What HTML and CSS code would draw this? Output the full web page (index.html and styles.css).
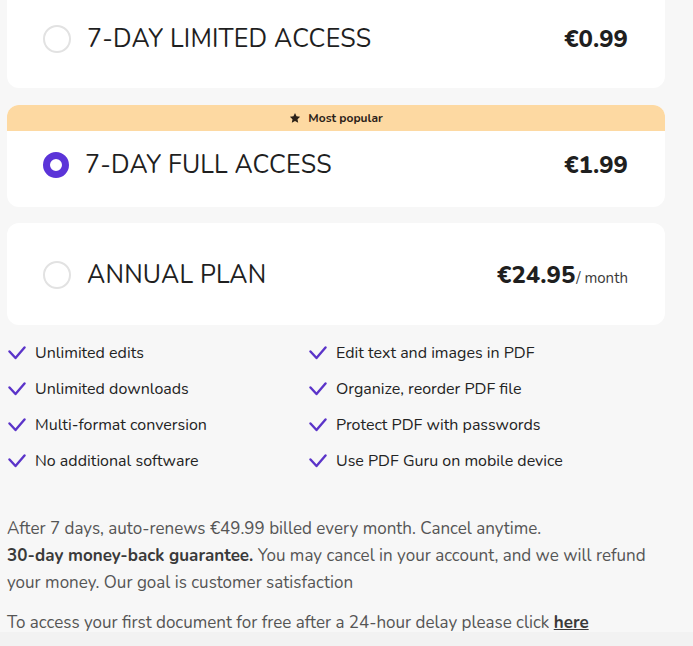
FILE: index.html
```html
<!DOCTYPE html>
<html lang="en">
<head>
<meta charset="utf-8">
<link rel="stylesheet" href="styles.css">
</head>
<body>
<div class="page">
  <div class="plans">
    <div class="card card-first">
      <div class="card-body">
        <span class="radio"></span>
        <span class="plan-name">7-DAY LIMITED ACCESS</span>
        <span class="price">€0.99</span>
      </div>
    </div>
    <div class="card card-popular">
      <div class="banner">
        <svg class="star" viewBox="0 0 24 24" width="12" height="12"><path d="M12 1.8l3.1 6.6 7.2.9-5.3 5 1.4 7.1L12 17.9l-6.4 3.5 1.4-7.1-5.3-5 7.2-.9z" fill="#2b2118"/></svg>
        <span>Most popular</span>
      </div>
      <div class="card-body body-popular">
        <span class="radio radio-on"></span>
        <span class="plan-name">7-DAY FULL ACCESS</span>
        <span class="price">€1.99</span>
      </div>
    </div>
    <div class="card">
      <div class="card-body">
        <span class="radio"></span>
        <span class="plan-name">ANNUAL PLAN</span>
        <span class="price">€24.95<span class="per">/ month</span></span>
      </div>
    </div>
  </div>

  <ul class="features">
    <li><svg class="check" viewBox="0 0 18 14" width="18" height="14"><path d="M1.5 5.5l6 6.5L16.5 1.5" fill="none" stroke="#5b34c9" stroke-width="2.4" stroke-linecap="round" stroke-linejoin="round"/></svg>Unlimited edits</li>
    <li><svg class="check" viewBox="0 0 18 14" width="18" height="14"><path d="M1.5 5.5l6 6.5L16.5 1.5" fill="none" stroke="#5b34c9" stroke-width="2.4" stroke-linecap="round" stroke-linejoin="round"/></svg>Edit text and images in PDF</li>
    <li><svg class="check" viewBox="0 0 18 14" width="18" height="14"><path d="M1.5 5.5l6 6.5L16.5 1.5" fill="none" stroke="#5b34c9" stroke-width="2.4" stroke-linecap="round" stroke-linejoin="round"/></svg>Unlimited downloads</li>
    <li><svg class="check" viewBox="0 0 18 14" width="18" height="14"><path d="M1.5 5.5l6 6.5L16.5 1.5" fill="none" stroke="#5b34c9" stroke-width="2.4" stroke-linecap="round" stroke-linejoin="round"/></svg>Organize, reorder PDF file</li>
    <li><svg class="check" viewBox="0 0 18 14" width="18" height="14"><path d="M1.5 5.5l6 6.5L16.5 1.5" fill="none" stroke="#5b34c9" stroke-width="2.4" stroke-linecap="round" stroke-linejoin="round"/></svg>Multi-format conversion</li>
    <li><svg class="check" viewBox="0 0 18 14" width="18" height="14"><path d="M1.5 5.5l6 6.5L16.5 1.5" fill="none" stroke="#5b34c9" stroke-width="2.4" stroke-linecap="round" stroke-linejoin="round"/></svg>Protect PDF with passwords</li>
    <li><svg class="check" viewBox="0 0 18 14" width="18" height="14"><path d="M1.5 5.5l6 6.5L16.5 1.5" fill="none" stroke="#5b34c9" stroke-width="2.4" stroke-linecap="round" stroke-linejoin="round"/></svg>No additional software</li>
    <li><svg class="check" viewBox="0 0 18 14" width="18" height="14"><path d="M1.5 5.5l6 6.5L16.5 1.5" fill="none" stroke="#5b34c9" stroke-width="2.4" stroke-linecap="round" stroke-linejoin="round"/></svg>Use PDF Guru on mobile device</li>
  </ul>

  <div class="terms">
    <p>After 7 days, auto-renews €49.99 billed every month. Cancel anytime.<br><b>30-day money-back guarantee.</b> You may cancel in your account, and we will refund your money. Our goal is customer satisfaction</p>
    <p class="free">To access your first document for free after a 24-hour delay please click <a href="#">here</a></p>
  </div>
</div>
<div class="bottom-band"></div>
</body>
</html>
```

FILE: styles.css
```css
html, body {
  margin: 0;
  padding: 0;
}
body {
  background: #f7f7f7;
  font-family: "Nunito", "Lato", sans-serif;
  color: #1f1f1f;
  height: 646px;
  overflow: hidden;
  position: relative;
}
.page {
  width: 658px;
  margin-left: 7px;
}
.plans {
  display: flex;
  flex-direction: column;
  gap: 16px;
  margin-top: -14px;
}
.card {
  background: #fff;
  border-radius: 12px;
  overflow: hidden;
}
.card-first {
  margin-bottom: 1px;
}
.card-body {
  height: 102px;
  display: flex;
  align-items: center;
  padding: 2px 37px 0 36px;
  box-sizing: border-box;
}
.card-first .card-body {
  padding-top: 3px;
}
.body-popular {
  height: 76px;
  padding-top: 0;
  padding-bottom: 8px;
}
.banner {
  height: 26px;
  background: #fdd9a2;
  display: flex;
  align-items: center;
  justify-content: center;
  gap: 7px;
  font-size: 12px;
  font-weight: 700;
  color: #2b2118;
}
.star {
  display: block;
}
.radio {
  width: 24px;
  height: 24px;
  border: 2px solid #e2e2e2;
  border-radius: 50%;
  flex: none;
  margin-right: 17px;
}
.radio-on {
  width: 12px;
  height: 12px;
  border: 7px solid #5b34d8;
}
.plan-name {
  font-size: 25px;
  font-weight: 400;
  color: #1f1f1f;
  letter-spacing: 0.2px;
  flex: 1;
  margin-left: -1px;
}
.price {
  font-size: 24px;
  font-weight: 800;
  color: #1f1f1f;
}
.per {
  font-size: 15px;
  font-weight: 400;
  color: #3a3a3a;
  margin-left: 1px;
}
.features {
  list-style: none;
  margin: 10px 0 0 0;
  padding: 0;
  display: grid;
  grid-template-columns: 301px 1fr;
}
.features li {
  height: 36px;
  display: flex;
  align-items: center;
  font-size: 16px;
  color: #232323;
}
.check {
  margin: 0 9px 0 1px;
  flex: none;
}
.terms {
  margin-top: 36px;
  color: #555;
  font-size: 17px;
  line-height: 27px;
}
.terms p {
  margin: 0;
}
.terms b {
  color: #3a3a3a;
  font-weight: 700;
}
.terms .free {
  margin-top: 13px;
}
.terms a {
  color: #3a3a3a;
  font-weight: 700;
  text-decoration: underline;
}
.bottom-band {
  position: absolute;
  left: 0;
  right: 0;
  bottom: 0;
  height: 14px;
  background: #f2f2f2;
}
```
